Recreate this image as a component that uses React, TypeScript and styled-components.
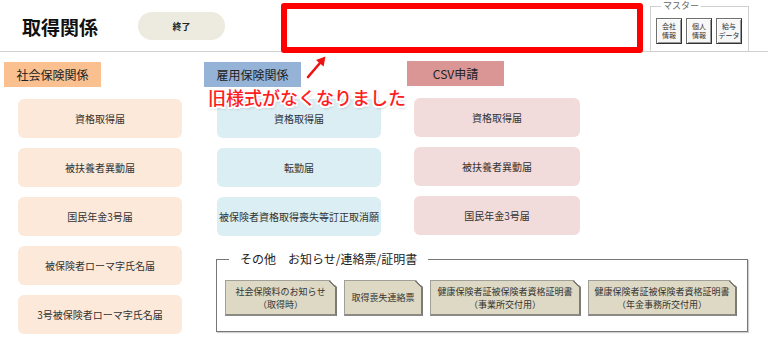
import styled, { createGlobalStyle } from "styled-components";

const GlobalStyle = createGlobalStyle`
  html, body {
    margin: 0;
    padding: 0;
    background: #fff;
  }

  body {
    font-family: "Noto Sans CJK JP", "Noto Sans", sans-serif;
    color: #222;
  }
`;

const socialForms = [
  "資格取得届",
  "被扶養者異動届",
  "国民年金3号届",
  "被保険者ローマ字氏名届",
  "3号被保険者ローマ字氏名届",
];

const employmentForms = ["資格取得届", "転勤届", "被保険者資格取得喪失等訂正取消願"];

const csvForms = ["資格取得届", "被扶養者異動届", "国民年金3号届"];

const otherDocs = [
  { lines: ["社会保険料のお知らせ", "（取得時）"], width: 112 },
  { lines: ["取得喪失連絡票"], width: 79 },
  { lines: ["健康保険者証被保険者資格証明書", "（事業所交付用）"], width: 151 },
  { lines: ["健康保険者証被保険者資格証明書", "（年金事務所交付用）"], width: 149 },
];

const masterButtons = [
  ["会社", "情報"],
  ["個人", "情報"],
  ["給与", "データ"],
];

const App = () => {
  return (
    <>
      <GlobalStyle />
      <Page>
        <Header>
          <Title>取得関係</Title>
          <EndButton>終了</EndButton>
          <NoticeFrame />
          <MasterBox>
            <MasterLegend>マスター</MasterLegend>
            <MasterRow>
              {masterButtons.map((b) => (
                <MasterButton key={b.join("")}>
                  <span>{b[0]}</span>
                  <span>{b[1]}</span>
                </MasterButton>
              ))}
            </MasterRow>
          </MasterBox>
        </Header>

        <Main>
          <Column>
            <SectionTitle $bg="#fac090">社会保険関係</SectionTitle>
            <FormList $indent={18} $width={164}>
              {socialForms.map((f) => (
                <FormButton key={f} $bg="#fde9d9">
                  {f}
                </FormButton>
              ))}
            </FormList>
          </Column>

          <RightArea>
            <ColumnsRow>
              <Column $width={203}>
                <SectionTitle $bg="#95b3d7">雇用保険関係</SectionTitle>
                <FormList $indent={17} $width={164}>
                  {employmentForms.map((f) => (
                    <FormButton key={f} $bg="#daeef3">
                      {f}
                    </FormButton>
                  ))}
                </FormList>
              </Column>
              <Column>
                <SectionTitle $bg="#d99694" $shift={-1}>
                  CSV申請
                </SectionTitle>
                <FormList $indent={11} $width={166}>
                  {csvForms.map((f) => (
                    <FormButton key={f} $bg="#f2dcdb">
                      {f}
                    </FormButton>
                  ))}
                </FormList>
              </Column>
            </ColumnsRow>

            <OtherGroup>
              <OtherLegend>その他　お知らせ/連絡票/証明書</OtherLegend>
              <DocRow>
                {otherDocs.map((d, i) => (
                  <DocButton key={i} $width={d.width}>
                    {d.lines.map((l) => (
                      <span key={l}>{l}</span>
                    ))}
                  </DocButton>
                ))}
              </DocRow>
            </OtherGroup>
          </RightArea>

          <Annotation>旧様式がなくなりました</Annotation>
          <Arrow viewBox="0 0 26 28" width="26" height="28">
            <line x1="4" y1="23" x2="16" y2="9" stroke="#ee1111" strokeWidth="2.6" strokeLinecap="round" />
            <polygon points="21.5,2.5 19.6,12.4 12.0,6.0" fill="#ee1111" />
          </Arrow>
        </Main>
      </Page>
    </>
  );
};

const Page = styled.div`
  width: 768px;
  height: 343px;
  overflow: hidden;
  background: #fff;
`;

// top bar, the line under it is the page divider
const Header = styled.div`
  height: 51px;
  display: flex;
  align-items: flex-start;
  border-bottom: 1px solid #d0d0d0;
`;

const Title = styled.h1`
  margin: 14px 0 0 22px;
  width: 116px;
  font-size: 19px;
  line-height: 26px;
  font-weight: 700;
  color: #111;
`;

const EndButton = styled.div`
  margin-top: 12px;
  width: 87px;
  height: 28px;
  border-radius: 14px;
  background: #edeadf;
  display: flex;
  align-items: center;
  justify-content: center;
  font-size: 9px;
  font-weight: 700;
  color: #222;
`;

const NoticeFrame = styled.div`
  margin: 3px 0 0 56px;
  width: 362px;
  height: 50px;
  box-sizing: border-box;
  border: 6px solid #ff0000;
  border-radius: 3px;
  background: #fff;
`;

const MasterBox = styled.fieldset`
  margin: 1px 0 0 7px;
  padding: 7px 6px 0 5px;
  height: 51px;
  box-sizing: border-box;
  border: 1px solid #cfcfcf;
  min-inline-size: 0;
  background: #fff;
`;

const MasterLegend = styled.legend`
  margin-left: 5px;
  padding: 0 2px;
  font-size: 9px;
  line-height: 10px;
  color: #666;
`;

const MasterRow = styled.div`
  display: flex;
  gap: 4px;
`;

const MasterButton = styled.div`
  width: 26px;
  height: 26px;
  box-sizing: border-box;
  border: 1px solid #6f6f6f;
  border-right-color: #333;
  border-bottom-color: #333;
  box-shadow: inset 1px 1px 0 #fff, inset -1px -1px 0 #9a9a9a;
  background: #f7f7f7;
  font-size: 7px;
  line-height: 9px;
  color: #333;
  display: flex;
  flex-direction: column;
  align-items: center;
  justify-content: center;
  white-space: nowrap;
`;

const Main = styled.div`
  position: relative;
  display: flex;
  padding-top: 10px;
`;

const Column = styled.div<{ $width?: number }>`
  width: ${(p) => (p.$width ? `${p.$width}px` : "200px")};
  flex-shrink: 0;
  display: flex;
  flex-direction: column;
`;

const SectionTitle = styled.div<{ $bg: string; $shift?: number }>`
  margin: ${(p) => p.$shift ?? 0}px 0 0 4px;
  width: 97px;
  height: 25px;
  line-height: 25px;
  text-align: center;
  background: ${(p) => p.$bg};
  font-size: 12px;
  color: #222;
`;

const FormList = styled.div<{ $indent: number; $width: number }>`
  margin: 12px 0 0 ${(p) => p.$indent}px;
  width: ${(p) => p.$width}px;
  display: flex;
  flex-direction: column;
  gap: 10px;
`;

const FormButton = styled.div<{ $bg: string }>`
  height: 39px;
  border-radius: 6px;
  background: ${(p) => p.$bg};
  display: flex;
  align-items: center;
  justify-content: center;
  font-size: 10px;
  color: #333;
  white-space: nowrap;
`;

const RightArea = styled.div`
  display: flex;
  flex-direction: column;
`;

const ColumnsRow = styled.div`
  display: flex;
`;

const OtherGroup = styled.fieldset`
  margin: 16px 0 0 16px;
  width: 532px;
  box-sizing: border-box;
  padding: 14px 0 15px 8px;
  border: 1px solid #777;
  min-inline-size: 0;
  box-shadow: 1px 1px 1px rgba(0, 0, 0, 0.18);
`;

const OtherLegend = styled.legend`
  margin-left: 4px;
  padding: 0 11px;
  font-size: 12px;
  line-height: 14px;
  color: #222;
`;

const DocRow = styled.div`
  display: flex;
  gap: 7px;
`;

const DocButton = styled.div<{ $width: number }>`
  width: ${(p) => p.$width}px;
  height: 36px;
  box-sizing: border-box;
  border: 1px solid #a09f98;
  border-right: 2px solid #7c7b76;
  border-bottom: 2px solid #8a8983;
  background: linear-gradient(225deg, transparent 5px, #7c7b76 5px, #7c7b76 6.5px, #ddd9c4 6.5px) border-box;
  clip-path: polygon(0 0, calc(100% - 7px) 0, 100% 7px, 100% 100%, 0 100%);
  display: flex;
  flex-direction: column;
  align-items: center;
  justify-content: center;
  font-size: 9px;
  line-height: 13px;
  color: #333;
  white-space: nowrap;
`;

// red hand-written note over the page
const Annotation = styled.div`
  position: absolute;
  left: 208px;
  top: 34px;
  font-size: 18px;
  line-height: 22px;
  font-weight: 500;
  color: #ff1c1c;
  white-space: nowrap;
  text-shadow: -1.5px 0 0 #fff, 1.5px 0 0 #fff, 0 -1.5px 0 #fff, 0 1.5px 0 #fff,
    -1.5px -1.5px 0 #fff, 1.5px 1.5px 0 #fff, -1.5px 1.5px 0 #fff, 1.5px -1.5px 0 #fff,
    1px 2px 3px rgba(0, 0, 0, 0.35);
`;

const Arrow = styled.svg`
  position: absolute;
  left: 304px;
  top: 2px;
`;

export default App;
